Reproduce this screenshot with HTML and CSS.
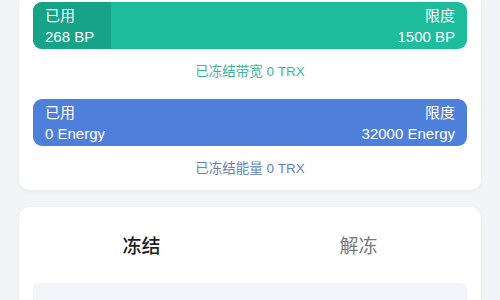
FILE: index.html
```html
<!DOCTYPE html>
<html lang="zh-CN">
<head>
    <meta charset="UTF-8" />
    <meta name="viewport" content="width=device-width, initial-scale=1.0"/>
    <title>资源</title>
    <link rel="stylesheet" href="styles.css">
</head>
<body>
    <div class="page">
        <div class="card resource-card">
            <div class="meter meter-bandwidth">
                <div class="meter-fill" style="width: 17.9%"></div>
                <div class="meter-text">
                    <div class="meter-col">
                        <span>已用</span>
                        <span>268 BP</span>
                    </div>
                    <div class="meter-col meter-col-right">
                        <span>限度</span>
                        <span>1500 BP</span>
                    </div>
                </div>
            </div>
            <p class="frozen-note note-bandwidth">已冻结带宽 0 TRX</p>

            <div class="meter meter-energy">
                <div class="meter-fill" style="width: 0%"></div>
                <div class="meter-text">
                    <div class="meter-col">
                        <span>已用</span>
                        <span>0 Energy</span>
                    </div>
                    <div class="meter-col meter-col-right">
                        <span>限度</span>
                        <span>32000 Energy</span>
                    </div>
                </div>
            </div>
            <p class="frozen-note note-energy">已冻结能量 0 TRX</p>
        </div>

        <div class="card action-card">
            <div class="tabs">
                <div class="tab tab-active">冻结</div>
                <div class="tab">解冻</div>
            </div>
            <div class="amount-box"></div>
        </div>
    </div>
</body>
</html>
```

FILE: styles.css
```css
/* Reset and base styles */
* {
    box-sizing: border-box;
    margin: 0;
    padding: 0;
}

body {
    font-family: 'Liberation Sans', 'Noto Sans CJK SC', sans-serif;
    background-color: #f3f4f7;
    height: 100vh;
    overflow: hidden;
}

.page {
    padding: 0 19px;
    display: flex;
    flex-direction: column;
    gap: 17px;
}

.card {
    background-color: #ffffff;
    border-radius: 10px;
    box-shadow: 0 1px 4px rgba(0, 0, 0, 0.05);
}

.resource-card {
    border-radius: 0 0 10px 10px;
    padding: 2px 14px 0;
    height: 190px;
}

.meter {
    position: relative;
    height: 47px;
    border-radius: 9px;
    overflow: hidden;
}

.meter-bandwidth {
    background-color: #1dbc9c;
}

.meter-bandwidth .meter-fill {
    background-color: #16a387;
}

.meter-energy {
    background-color: #4d7fdb;
}

.meter-energy .meter-fill {
    background-color: #3c6cc8;
}

.meter-fill {
    position: absolute;
    top: 0;
    left: 0;
    bottom: 0;
}

.meter-text {
    position: relative;
    display: flex;
    justify-content: space-between;
    padding: 3px 12px 0;
    color: #ffffff;
    font-size: 15px;
    line-height: 21px;
}

.meter-col {
    display: flex;
    flex-direction: column;
}

.meter-col-right {
    align-items: flex-end;
}

.frozen-note {
    text-align: center;
    font-size: 13.5px;
    line-height: 20px;
    padding: 13px 0 17px;
}

.note-bandwidth {
    color: #3cb39b;
}

.note-energy {
    color: #6581bd;
}

.action-card {
    padding: 0 14px;
    height: 120px;
}

.tabs {
    display: flex;
    padding-top: 24px;
    height: 76px;
}

.tab {
    flex: 1;
    text-align: center;
    font-family: 'Noto Sans CJK SC', sans-serif;
    font-size: 19px;
    line-height: 28px;
    color: #7a7a7a;
}

.tab-active {
    color: #1f1f1f;
    font-weight: 500;
}

.amount-box {
    height: 40px;
    background-color: #f3f5fb;
    border-radius: 6px;
}
```
